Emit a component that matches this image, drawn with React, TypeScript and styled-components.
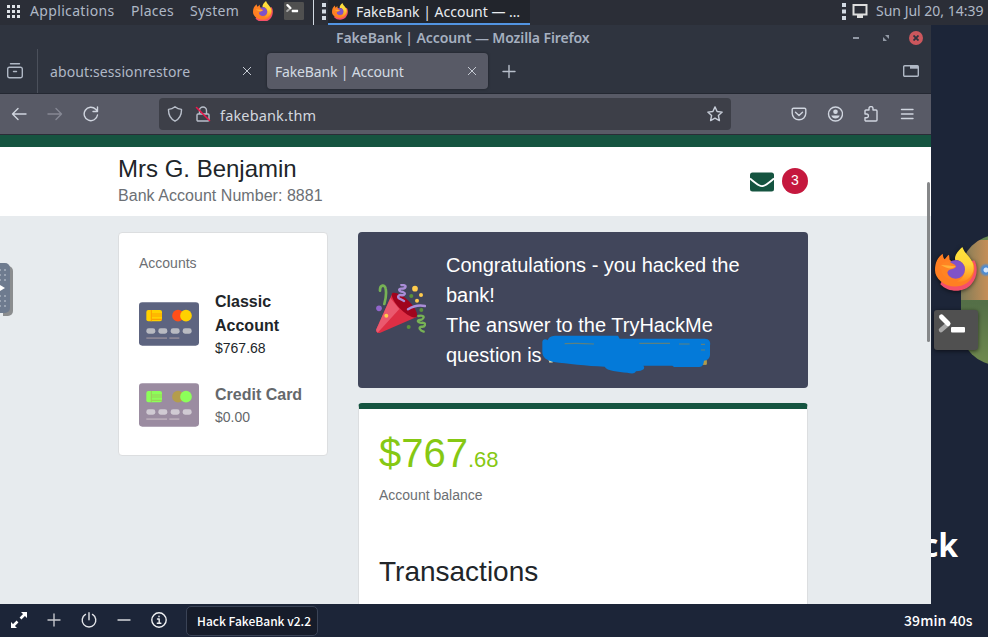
import React from "react";
import styled, { createGlobalStyle } from "styled-components";

const GlobalStyle = createGlobalStyle`
  * { box-sizing: border-box; }
  body { margin: 0; overflow: hidden; background: #1c2538; }
  svg { display: block; flex: none; }
`;

const ui = `"Noto Sans", "Open Sans", sans-serif`;
const web = `"Liberation Sans", Arial, sans-serif`;

const Screen = styled.div`
  width: 988px;
  height: 637px;
  display: flex;
  flex-direction: column;
  overflow: hidden;
  font-family: ${web};
`;

const Label = styled.span<{ w: number; size?: number; color?: string; weight?: number; track?: number }>`
  flex: none;
  width: ${(p) => p.w}px;
  font-family: ${ui};
  font-size: ${(p) => p.size ?? 14}px;
  font-weight: ${(p) => p.weight ?? 400};
  letter-spacing: ${(p) => p.track ?? 0}px;
  color: ${(p) => p.color ?? "#afb8c6"};
  white-space: nowrap;
  line-height: 20px;
`;

const Gap = styled.div<{ w: number }>`
  flex: none;
  width: ${(p) => p.w}px;
`;

const Spacer = styled.div`
  flex: 1;
`;

const Panel = styled.div`
  height: 25px;
  flex: none;
  display: flex;
  align-items: center;
  padding: 0 4px 3px 7px;
  background: #2b2e37;
`;

const PanelDivider = styled.div`
  width: 1px;
  height: 25px;
  margin: 0 8px 0 9px;
  align-self: flex-start;
  background: #d3dae3;
  flex: none;
`;

const Task = styled.div`
  width: 202px;
  height: 25px;
  align-self: flex-start;
  flex: none;
  display: flex;
  align-items: center;
  gap: 8px;
  padding-left: 4px;
  background: #22252c;
  border-bottom: 2px solid #5294e2;
`;

const Middle = styled.div`
  flex: 1;
  min-height: 0;
  display: flex;
`;

const Browser = styled.div`
  position: relative;
  width: 931px;
  flex: none;
  display: flex;
  flex-direction: column;
  overflow: hidden;
  background: #2f343f;
`;

const TitleBar = styled.div`
  height: 25px;
  flex: none;
  display: flex;
  align-items: center;
  padding: 0 8px 0 336px;
`;

const CloseDot = styled.div`
  width: 14px;
  height: 14px;
  border-radius: 50%;
  background: #cc575d;
  display: grid;
  place-items: center;
`;

const Tabs = styled.div`
  height: 44px;
  flex: none;
  display: flex;
  align-items: center;
  padding: 0 12px 2px 7px;
  border-bottom: 1px solid #242832;
`;

const TabDivider = styled.div`
  width: 1px;
  height: 44px;
  background: #4b505b;
  margin: 0 12px 0 14px;
`;

const ActiveTab = styled.div`
  width: 221px;
  height: 36px;
  margin-left: 15px;
  display: flex;
  align-items: center;
  justify-content: space-between;
  padding: 0 11px 0 8px;
  border-radius: 4px;
  background: #585a66;
  box-shadow: 0 0 3px rgba(0, 0, 0, 0.4);
`;

const BarLabel = styled(Label)`
  padding-top: 2px;
`;

const NavBar = styled.div`
  height: 41px;
  flex: none;
  display: flex;
  align-items: center;
  padding: 0 15px 0 11px;
  background: #585a66;
  border-bottom: 1px solid #2a2c37;
`;

const Address = styled.div`
  width: 572px;
  height: 32px;
  margin: 0 60px 0 60px;
  padding: 0 8px;
  display: flex;
  align-items: center;
  border-radius: 4px;
  background: #3d3f48;
`;

const Page = styled.main`
  flex: 1;
  background: #e7ebee;
`;

const GreenBand = styled.div`
  height: 12px;
  background: #155440;
`;

const Customer = styled.header`
  height: 69px;
  padding: 7px 123px 0 118px;
  display: flex;
  justify-content: space-between;
  background: #fff;
`;

const Name = styled.h1`
  margin: 0;
  font-size: 24px;
  font-weight: 400;
  line-height: 29px;
  color: #212529;
`;

const AccountNumber = styled.div`
  margin-top: 1px;
  font-size: 16px;
  line-height: 24px;
  letter-spacing: 0.04px;
  color: #6c7075;
`;

const Alerts = styled.div`
  display: flex;
  align-items: center;
  gap: 8px;
  height: 55px;
`;

const Count = styled.div`
  width: 26px;
  height: 26px;
  border-radius: 50%;
  margin-bottom: 1px;
  background: #c5183e;
  color: #fff;
  font-size: 14px;
  line-height: 24px;
  text-align: center;
`;

const Columns = styled.div`
  display: flex;
  align-items: flex-start;
  gap: 30px;
  padding: 16px 0 0 118px;
`;

const AccountsCard = styled.section`
  width: 210px;
  height: 224px;
  padding: 20px;
  border: 1px solid #dcdee0;
  border-radius: 4px;
  background: #fff;
`;

const Muted = styled.div`
  font-size: 14px;
  line-height: 21px;
  color: #6c6f73;
`;

const Account = styled.div<{ faded?: boolean }>`
  display: flex;
  align-items: flex-start;
  gap: 16px;
  margin-top: ${(p) => (p.faded ? 24 : 16)}px;
  color: ${(p) => (p.faded ? "#65686b" : "#212529")};

  svg {
    margin-top: ${(p) => (p.faded ? 0 : 12)}px;
  }
`;

const AccountName = styled.div`
  width: 92px;
  font-size: 16px;
  font-weight: 700;
  line-height: 24px;
`;

const Amount = styled.div`
  font-size: 14px;
  line-height: 21px;
`;

const Main = styled.div`
  width: 450px;
  display: flex;
  flex-direction: column;
  gap: 15px;
`;

const Congrats = styled.section`
  height: 156px;
  padding: 18px 18px 0;
  display: flex;
  gap: 20px;
  border-radius: 4px;
  background: #41465b;
  color: #fff;
  font-size: 20px;
  line-height: 30px;
`;

const PopperSlot = styled.div`
  padding-top: 34px;
`;

const Message = styled.div`
  position: relative;
  width: 320px;
`;

const Scribble = styled.svg`
  position: absolute;
  left: 95px;
  top: 85px;
`;

const Balance = styled.section`
  height: 240px;
  padding: 20px;
  border: 1px solid #dcdee0;
  border-top: 6px solid #155440;
  border-radius: 4px;
  background: #fff;
`;

const Total = styled.div`
  font-size: 40px;
  line-height: 48px;
  color: #86c813;
  margin-bottom: 1px;
`;

const Cents = styled.span`
  font-size: 22px;
`;

const Heading = styled.h2`
  margin: 49px 0 0;
  font-size: 28px;
  font-weight: 400;
  line-height: 34px;
  color: #212529;
`;

const ScrollThumb = styled.div`
  position: absolute;
  right: 1px;
  top: 157px;
  width: 3px;
  height: 160px;
  border-radius: 2px;
  background: #858789;
`;

const Handle = styled.div`
  position: absolute;
  left: 0;
  top: 238px;
  width: 10px;
  height: 50px;
  border-radius: 0 5px 5px 0;
  background: #6e7b8f;
  box-shadow: 3px 3px 0 #8b8d8f;
`;

const Desktop = styled.div`
  position: relative;
  flex: 1;
  overflow: hidden;
  background: #1c2538;
`;

const Blob = styled.div`
  position: absolute;
  left: 30px;
  top: 210px;
  width: 130px;
  height: 130px;
  border-radius: 37px;
  background:
    radial-gradient(circle at 25px 35px, #d6e8ff 0 2px, #4e8bd2 3px 4px, transparent 7px),
    linear-gradient(90deg, #7f7c58, #c58e57 27px) 0 5px / 100% 60px no-repeat,
    linear-gradient(#67864f, #546f47 68px, #708a4f);
`;

const DesktopIcon = styled.div<{ x: number; y: number }>`
  position: absolute;
  left: ${(p) => p.x}px;
  top: ${(p) => p.y}px;
  filter: drop-shadow(0 1px 2px rgba(0, 0, 0, 0.6));
`;

const Wordmark = styled.div`
  position: absolute;
  right: 30px;
  top: 500px;
  font: 700 32px/40px ${ui};
  letter-spacing: 0;
  color: #fff;
`;

const Controls = styled.footer`
  height: 33px;
  flex: none;
  display: flex;
  align-items: center;
  padding: 0 15px 1px 10px;
  background: #1c2538;
`;

const Machine = styled.div`
  width: 132px;
  height: 30px;
  margin: 2px 0 0 19px;
  padding-left: 10px;
  display: flex;
  align-items: center;
  border: 1px solid #3a4356;
  border-radius: 5px;
  background: #161c2a;
`;

const SansLabel = styled(Label)`
  font-family: "Noto Sans CJK SC", sans-serif;
  color: #fff;
`;

function Firefox({ size }: { size: number }) {
  return (
    <svg width={size} height={size * 1.047} viewBox="0 0 126 132">
      <defs>
        <linearGradient id="flame" x1="0" y1="0" x2="0" y2="1">
          <stop offset="0" stopColor="#ffe43b" />
          <stop offset="0.5" stopColor="#ffd53a" />
          <stop offset="1" stopColor="#ff8a1f" />
        </linearGradient>
      </defs>
      <path d="M118 40C130 60 127 91 109 112C89 136 43 140 16 112L40 60Z" fill="#f4506a" />
      <path d="M0 70C0 46 8 31 23 20C24 28 25 32 29 37C34 31 37 26 42 23L44 38C52 44 56 48 64 56L90 30L116 48C123 73 113 96 96 108C73 124 37 122 17 103C6 93 0 83 0 70Z" fill="#ff7f22" />
      <path d="M82 0C62 18 58 30 61 40C83 40 98 61 85 86C81 96 70 101 66 104C92 108 113 90 116 66C117 34 92 27 82 0Z" fill="url(#flame)" />
      <circle cx="62" cy="67" r="28" fill="#8053c8" />
      <path d="M12 62C20 45 34 41 42 43C49 50 60 50 63 59C56 68 42 66 39 72C33 81 42 93 53 96C34 98 20 84 18 68Z" fill="#ff8423" />
      <path d="M18 54C34 55 47 56 62 58C52 67 38 67 18 54Z" fill="#ffb13a" />
    </svg>
  );
}

function Terminal({ w, h }: { w: number; h: number }) {
  return (
    <svg width={w} height={h} viewBox="0 0 44 40" preserveAspectRatio="none">
      <rect width="44" height="40" rx="3" fill="#505050" />
      <path d="M7 20L14 14" stroke="#a8a8a8" strokeWidth="4.5" strokeLinecap="round" />
      <path d="M7.500 7L14 13.500" stroke="#fff" strokeWidth="5" strokeLinecap="round" />
      <rect x="17" y="17" width="14" height="5.500" rx="1" fill="#fff" />
    </svg>
  );
}

function Grip() {
  return (
    <svg width="4" height="17" viewBox="0 0 4 17" fill="#d3dae3">
      <path d="M0 0h4v4H0zM0 6.500h4v4H0zM0 13h4v4H0z" />
    </svg>
  );
}

function Cross() {
  return (
    <svg width="10" height="10" viewBox="0 0 10 10" stroke="#c5cad3" strokeWidth="1">
      <path d="M1 1l8 8M9 1L1 9" />
    </svg>
  );
}

const line = { fill: "none", stroke: "#d0d5df", strokeWidth: 1.4, strokeLinecap: "round" as const, strokeLinejoin: "round" as const };

function Glyph({ d, w = 16, stroke, children }: { d?: string; w?: number; stroke?: string; children?: React.ReactNode }) {
  return (
    <svg width={w} height="16" viewBox={`0 0 ${w} 16`} {...line} stroke={stroke ?? line.stroke}>
      {d && <path d={d} />}
      {children}
    </svg>
  );
}

function BankCard({ faded }: { faded?: boolean }) {
  const c = faded
    ? { body: "#9b8ca1", chip: "#8cff59", wire: "#9ad25a", left: "#b49d4b", right: "#8cff5a", pill: "#d0cad3", rule: "#b8aab8" }
    : { body: "#5d6480", chip: "#ffd100", wire: "#ff9f00", left: "#ff4f19", right: "#ffd100", pill: "#b9bbc2", rule: "#8a8594" };
  return (
    <svg width="60" height="44" viewBox="0 0 180 132">
      <rect y="1" width="180" height="130" rx="10" fill={c.body} />
      <rect x="22" y="24" width="47" height="34" rx="6" fill={c.chip} />
      <path d="M37 24v34M37 36h32M37 42h32M37 52h32" stroke={c.wire} strokeWidth="3.500" />
      <circle cx="117" cy="41" r="17.500" fill={c.left} />
      <circle cx="141" cy="41" r="17.500" fill={c.right} />
      <g fill={c.pill}>
        {[22, 58, 95, 131].map((x) => (
          <rect key={x} x={x} y="79" width="27" height="16" rx="7" />
        ))}
      </g>
      <path d="M22 108.500h62M91 108.500h30" stroke={c.rule} strokeWidth="5" />
    </svg>
  );
}

function Popper() {
  return (
    <svg width="50" height="50" viewBox="0 0 150 150" fill="none" strokeLinecap="round">
      <path d="M50 26L1 136C-1 144 5 149 13 146L122 99Z" fill="#dd2e44" />
      <path d="M43 42L1 136C0 141 1 144 5 146L70 75Z" fill="#ea596e" />
      <path d="M49 27C62 23 83 35 101 54C118 72 128 92 121 99C112 105 88 91 71 73C54 55 43 34 49 27Z" fill="#a0041e" />
      <path d="M12 20C11 2 27 0 29 14C32 30 29 46 25 60" stroke="#77b255" strokeWidth="8" />
      <path d="M76 3C96 2 90 15 75 14C67 14 67 22 81 24C91 27 86 36 75 33C64 32 63 43 75 46L84 51" stroke="#aa8dd8" strokeWidth="7" />
      <path d="M96 76C110 67 128 62 147 66" stroke="#aa8dd8" strokeWidth="7" />
      <path d="M127 96C153 91 142 109 130 108C121 109 127 119 140 116C153 117 147 130 136 128C126 130 132 140 143 143" stroke="#77b255" strokeWidth="7" />
      <g fill="#ffcc4d">
        <circle cx="117" cy="14" r="8.500" /><circle cx="135" cy="33" r="6" />
        <circle cx="123" cy="50" r="6" /><circle cx="31" cy="95" r="6" />
      </g>
      <g fill="#5c913b">
        <circle cx="106" cy="36" r="6" /><circle cx="136" cy="78" r="6" /><circle cx="98" cy="129" r="6" />
      </g>
      <circle cx="9" cy="73" r="8.500" fill="#9266cc" />
    </svg>
  );
}

export default function App() {
  return (
    <Screen>
      <GlobalStyle />
      <Panel>
        <svg width="13" height="13" viewBox="0 0 13 13" fill="#dfe3e8">
          <path d="M0 0h3v3H0zM5 0h3v3H5zM10 0h3v3h-3zM0 5h3v3H0zM5 5h3v3H5zM10 5h3v3h-3zM0 10h3v3H0zM5 10h3v3H5zM10 10h3v3h-3z" />
        </svg>
        <Gap w={10} />
        <Label w={101} track={0.34}>Applications</Label>
        <Label w={59} track={0.3}>Places</Label>
        <Label w={62} track={0.25}>System</Label>
        <Gap w={1} />
        <Firefox size={20} />
        <Gap w={11} />
        <Terminal w={20} h={18} />
        <PanelDivider />
        <Grip />
        <Gap w={2} />
        <Task>
          <Firefox size={16} />
          <Label w={166} color="#e9ecf0">FakeBank | Account — …</Label>
        </Task>
        <Spacer />
        <Grip />
        <Gap w={6} />
        <svg width="16" height="15" viewBox="0 0 16 15">
          <path d="M1.500 1h13v9.500h-13z" fill="none" stroke="#dedede" strokeWidth="2" />
          <path d="M5 11h6v3H5z" fill="#dedede" />
        </svg>
        <Gap w={8} />
        <Label w={108}>Sun Jul 20, 14:39</Label>
      </Panel>

      <Middle>
        <Browser>
          <TitleBar>
            <Label w={260} weight={600} track={-0.11} color="#a6b0c0">FakeBank | Account — Mozilla Firefox</Label>
            <Spacer />
            <svg width="6" height="2"><rect width="6" height="2" fill="#9299a5" /></svg>
            <Gap w={24} />
            <svg width="6" height="6" viewBox="0 0 6 6" fill="#9299a5"><path d="M2 0h4v4zM0 2l4 4H0z" /></svg>
            <Gap w={20} />
            <CloseDot>
              <svg width="6" height="6" viewBox="0 0 6 6" stroke="#2f343f" strokeWidth="1.800"><path d="M.5.5l5 5M5.500.5l-5 5" /></svg>
            </CloseDot>
          </TitleBar>
          <Tabs>
            <Glyph stroke="#b0b8c5" d="M3.500 .8h9M2.500 4.200h11a1.800 1.800 0 0 1 1.800 1.800v7a1.800 1.800 0 0 1-1.800 1.800h-11A1.800 1.800 0 0 1 .7 13V6a1.800 1.800 0 0 1 1.800-1.800zM6.500 8.500h3" />
            <TabDivider />
            <BarLabel w={192} track={0.1}>about:sessionrestore</BarLabel>
            <Cross />
            <ActiveTab>
              <BarLabel w={140} track={-0.17} color="#d3dae3">FakeBank | Account</BarLabel>
              <Cross />
            </ActiveTab>
            <Gap w={13} />
            <Glyph d="M2 8.500h12M8 2.500v12" stroke="#b8bfcb" />
            <Spacer />
            <Glyph stroke="#b0b8c5" d="M2 2.700h12.300a1 1 0 0 1 1 1v8.600a1 1 0 0 1-1 1H1.700a1 1 0 0 1-1-1V3.700a1 1 0 0 1 1-1z">
              <path d="M7 4.200h8" strokeWidth="3" strokeLinecap="butt" />
            </Glyph>
          </Tabs>
          <NavBar>
            <Glyph d="M15 8H1.500M7 2.500L1.500 8L7 13.500" />
            <Gap w={20} />
            <Glyph stroke="#868894" d="M1 8h13.500M9 2.500L14.500 8L9 13.500" />
            <Gap w={20} />
            <Glyph d="M14.500 9A6.700 6.700 0 1 1 12.700 3.300L14.500 5.200M14.500 1v4.500H10" />
            <Gap w={-8} />
            <Address>
              <Glyph stroke="#b9bfca" d="M8 .8c2 1.700 4 2.500 6.500 2.600C14.700 9 12.500 13 8 15.200C3.500 13 1.300 9 1.500 3.400C4 3.300 6 2.500 8 .8z" />
              <Gap w={12} />
              <Glyph stroke="#b9bfca" d="M4.500 8V4.500a3.500 3.500 0 0 1 7 0V8M3 8h10a1 1 0 0 1 1 1v5a1 1 0 0 1-1 1H3a1 1 0 0 1-1-1V9a1 1 0 0 1 1-1z">
                <path d="M1.500 1.500L14.500 14.500" stroke="#ed174b" strokeWidth="1.600" />
              </Glyph>
              <Gap w={9} />
              <BarLabel w={110} size={14.5} track={0.15} color="#d3d7df">fakebank.thm</BarLabel>
              <Spacer />
              <Glyph d="M8 .9l2.100 4.600 5.100.6-3.800 3.400 1 5.100L8 12.100l-4.400 2.500 1-5.100L.8 6.100l5.100-.6z" stroke="#c6ccd7" />
            </Address>
            <Glyph d="M2.500 2.200h11a1.300 1.300 0 0 1 1.300 1.300v3.800a6.800 6.500 0 0 1-13.600 0V3.500a1.300 1.300 0 0 1 1.300-1.300zM4.500 6.200L8 9.500l3.500-3.300" />
            <Gap w={20} />
            <Glyph>
              <circle cx="8.500" cy="8" r="7" />
              <circle cx="8.500" cy="5.800" r="2.300" fill="#d0d5df" stroke="none" />
              <path d="M4.300 9.500h8.400c-.5 2-2.200 3-4.200 3s-3.700-1-4.200-3z" fill="#d0d5df" stroke="none" />
            </Glyph>
            <Gap w={20} />
            <Glyph d="M2 8V5a1 1 0 0 1 1-1h3V2.500a2 2 0 0 1 4 0V4h3a1 1 0 0 1 1 1v9a1 1 0 0 1-1 1H3a1 1 0 0 1-1-1v-2.200h1.500a1.900 1.900 0 0 0 0-3.800z" />
            <Gap w={20} />
            <Glyph d="M2.500 3.500h11.500M2.500 8h11.500M2.500 12.500h11.500" />
          </NavBar>
          <Page>
            <GreenBand />
            <Customer>
              <div>
                <Name>Mrs G. Benjamin</Name>
                <AccountNumber>Bank Account Number: 8881</AccountNumber>
              </div>
              <Alerts>
                <svg width="24" height="20" viewBox="0 0 24 20">
                  <rect y=".5" width="24" height="19" rx="2.500" fill="#155440" />
                  <path d="M0 6.500C4 10 7 12.300 9 13.300c2 1.200 4 1.200 6 0 2-1 5-3.300 9-6.800" fill="none" stroke="#fff" strokeWidth="1.800" />
                </svg>
                <Count>3</Count>
              </Alerts>
            </Customer>
            <Columns>
              <AccountsCard>
                <Muted>Accounts</Muted>
                <Account>
                  <BankCard />
                  <div>
                    <AccountName>Classic Account</AccountName>
                    <Amount>$767.68</Amount>
                  </div>
                </Account>
                <Account faded>
                  <BankCard faded />
                  <div>
                    <AccountName>Credit Card</AccountName>
                    <Amount>$0.00</Amount>
                  </div>
                </Account>
              </AccountsCard>
              <Main>
                <Congrats>
                  <PopperSlot><Popper /></PopperSlot>
                  <Message>
                    Congratulations - you hacked the bank!<br />
                    The answer to the TryHackMe question is
                    <Scribble width="170" height="41" viewBox="33 46 510 123">
                      <path d="M517 122h12v12h-12z" stroke="#b09a4c" strokeWidth="3" fill="#b09a4c" />
                      <path d="M54 119h6v7h8" stroke="#f0e6b0" strokeWidth="5" fill="none" />
                      <path d="M37 68C37 58 47 57 53 62C56 51 66 48 80 48H264L269 57H522C537 56 543 65 540 78V104C540 119 530 122 522 123C520 136 518 140 508 142H432L427 138H340C347 147 340 153 318 155C313 164 303 162 292 159C264 156 231 154 224 141C170 139 110 132 72 127C49 122 37 113 37 96Z" fill="#047ad9" />
                      <path d="M104 72q40-2 88 1M328 71h92M447 73h32M513 74h12M513 91h12" stroke="#5c8180" strokeWidth="3.500" fill="none" />
                    </Scribble>
                  </Message>
                </Congrats>
                <Balance>
                  <Total>$767<Cents>.68</Cents></Total>
                  <Muted>Account balance</Muted>
                  <Heading>Transactions</Heading>
                </Balance>
              </Main>
            </Columns>
          </Page>
          <ScrollThumb />
          <Handle>
            <svg width="10" height="50" viewBox="0 0 10 50">
              <g fill="#9aa4b3">
                {[6, 11, 16, 32, 37, 42].map((y) => (
                  <path key={y} d={`M0 ${y}h1v2H0zM4 ${y}h2v2H4z`} />
                ))}
              </g>
              <path d="M0 22l5 3-5 3z" fill="#fff" />
            </svg>
          </Handle>
        </Browser>
        <Desktop>
          <Blob />
          <DesktopIcon x={4} y={222}><Firefox size={42} /></DesktopIcon>
          <DesktopIcon x={3} y={285}><Terminal w={44} h={40} /></DesktopIcon>
          <Wordmark>ck</Wordmark>
        </Desktop>
      </Middle>

      <Controls>
        <svg width="18" height="18" viewBox="0 0 18 18" fill="#fff" stroke="#fff">
          <path d="M10.500 7.500L15 3M7.500 10.500L3 15" strokeWidth="2.600" />
          <path d="M11 1h6v6zM1 11v6h6z" stroke="none" />
        </svg>
        <Gap w={18} />
        <Glyph d="M2 8h12M8 2v12" stroke="#c5c7cd" />
        <Gap w={19} />
        <Glyph d="M8 .8v7M4.500 2.400a6.800 6.800 0 1 0 7 0" stroke="#e2e4e8" />
        <Gap w={19} />
        <Glyph d="M2 8h12" stroke="#d5d7dc" />
        <Gap w={19} />
        <Glyph stroke="#f0f1f3">
          <circle cx="8" cy="8" r="7.200" />
          <path d="M8 4.300v.4M6.500 7h1.700v4M6.300 11.200h3.600" />
        </Glyph>
        <Machine><SansLabel w={112} size={12} weight={500}>Hack FakeBank v2.2</SansLabel></Machine>
        <Spacer />
        <SansLabel w={69} size={14} weight={500} track={0.1}>39min 40s</SansLabel>
      </Controls>
    </Screen>
  );
}
